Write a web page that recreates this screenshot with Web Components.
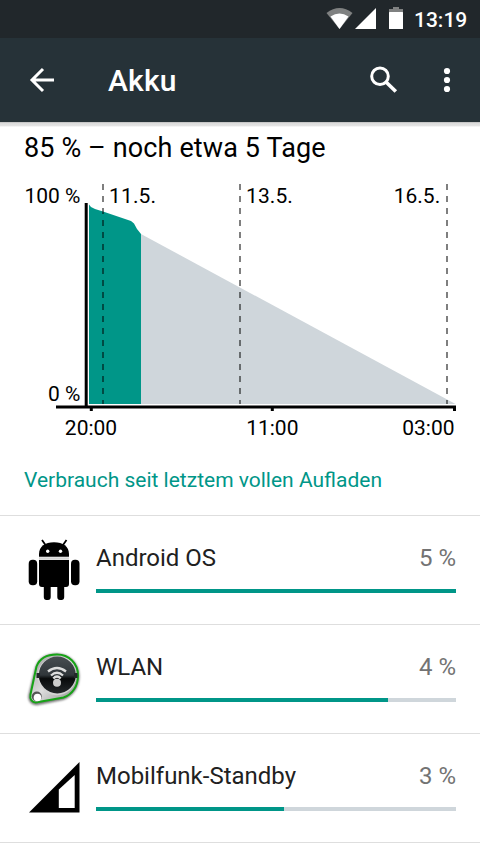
<!DOCTYPE html>
<html lang="de">
<head>
<meta charset="utf-8">
<title>Akku</title>
<style>
  html, body {
    margin: 0;
    height: 100%;
    overflow: hidden;
    background: #fff;
    font-family: Roboto, "Noto Sans", sans-serif;
  }
</style>
</head>
<body>
<battery-screen></battery-screen>

<script>
class StatusBar extends HTMLElement {
  constructor() {
    super();
    this.attachShadow({ mode: "open" });
  }
  connectedCallback() {
    this.shadowRoot.innerHTML = `
      <style>
        :host {
          display: flex;
          justify-content: flex-end;
          height: 38px;
          background: #21272b;
          color: #fff;
          box-sizing: border-box;
          padding-right: 12px;
        }
        svg { display: block; margin-right: 10px; }
        span {
          width: 54px;
          font-size: 21px;
          font-weight: 500;
          line-height: 40px;
        }
      </style>
      <svg width="78" height="38" viewBox="326 0 78 38" fill="#fff">
        <path d="M326.500 13Q339.500 3 352.500 13L339.500 29Z" fill="#7f8181"/>
        <path d="M330.500 16.500Q339.500 10.500 348.500 16.500L339.500 29Z"/>
        <path d="M355 29L376 8V29Z"/>
        <path d="M389 9H393V7H399V9H403V13H389Z" fill="#7f8181"/>
        <rect x="389" y="12" width="14" height="17" rx=".5"/>
      </svg>
      <span><slot></slot></span>
    `;
  }
}
customElements.define("status-bar", StatusBar);

class ToolBar extends HTMLElement {
  constructor() {
    super();
    this.attachShadow({ mode: "open" });
  }
  connectedCallback() {
    this.shadowRoot.innerHTML = `
      <style>
        :host {
          display: flex;
          height: 84px;
          background: #263238;
          color: #fff;
        }
        h1 {
          flex: 1;
          margin: 0;
          font-size: 30px;
          font-weight: 500;
          letter-spacing: .2px;
          line-height: 86px;
        }
        svg { display: block; }
        .back { margin-right: 24px; }
      </style>
      <svg class="back" width="84" height="84" viewBox="0 38 84 84" fill="none" stroke="#fff" stroke-width="3">
        <path d="M54 80H32M43 69L32 80L43 91"/>
      </svg>
      <h1><slot></slot></h1>
      <svg width="120" height="84" viewBox="360 38 120 84">
        <circle cx="380" cy="76.200" r="8.300" fill="none" stroke="#fff" stroke-width="3"/>
        <path d="M386 82L395.800 91.500" stroke="#fff" stroke-width="3.600"/>
        <g fill="#fff">
          <circle cx="447" cy="71" r="3.100"/>
          <circle cx="447" cy="80" r="3.100"/>
          <circle cx="447" cy="89" r="3.100"/>
        </g>
      </svg>
    `;
  }
}
customElements.define("tool-bar", ToolBar);

class BatteryChart extends HTMLElement {
  constructor() {
    super();
    this.attachShadow({ mode: "open" });
  }
  connectedCallback() {
    // Koordinaten entsprechen direkt dem Bildschirm (y ab 170)
    this.shadowRoot.innerHTML = `
      <style>
        :host { display: block; height: 280px; }
        svg { display: block; }
        text { font-family: Roboto, "Noto Sans", sans-serif; font-size: 21px; fill: #000; }
      </style>
      <svg width="480" height="280" viewBox="0 170 480 280">
        <path d="M141 404V234L455.500 404Z" fill="#cfd6db"/>
        <path d="M89 404V204.500L91 207L95 209L103 211.500L131 221L134 223.500L137 229L141 234V404Z" fill="#009688"/>
        <g stroke="#000" stroke-opacity=".5" stroke-width="2" stroke-dasharray="6 6">
          <path d="M103 184V404"/>
          <path d="M240 184V404"/>
          <path d="M447 184V404"/>
        </g>
        <g stroke="#000" stroke-width="3">
          <path d="M86.200 203V406"/>
          <path d="M56 407H456"/>
          <path d="M91.300 407V411M272.300 407V411M454.500 407V411"/>
        </g>
        <text x="80.500" y="203" text-anchor="end">100 %</text>
        <text x="109" y="203" letter-spacing=".15">11.5.</text>
        <text x="246" y="203" letter-spacing=".1">13.5.</text>
        <text x="440.200" y="203" text-anchor="end">16.5.</text>
        <text x="80.500" y="401" text-anchor="end">0 %</text>
        <text x="91" y="435" text-anchor="middle">20:00</text>
        <text x="272.300" y="435" text-anchor="middle">11:00</text>
        <text x="454.500" y="435" text-anchor="end">03:00</text>
      </svg>
    `;
  }
}
customElements.define("battery-chart", BatteryChart);

class UsageRow extends HTMLElement {
  constructor() {
    super();
    this.attachShadow({ mode: "open" });
  }
  connectedCallback() {
    this.shadowRoot.innerHTML = `
      <style>
        :host {
          display: grid;
          grid-template-columns: 80px 360px;
          height: 109px;
          padding-left: 16px;
          box-sizing: border-box;
          border-bottom: 1px solid #dedede;
        }
        ::slotted(svg) { display: block; margin-top: 14px; }
        .line {
          display: flex;
          justify-content: space-between;
          margin-top: 28px;
          height: 28px;
          line-height: 28px;
          font-size: 24px;
          color: #212121;
        }
        .value { color: #737373; }
        .track { margin-top: 17px; height: 4px; background: #cfd6db; }
        .fill { height: 4px; background: #009688; }
      </style>
      <slot></slot>
      <div>
        <div class="line">
          <span>${this.getAttribute("name")}</span>
          <span class="value">${this.getAttribute("value")}</span>
        </div>
        <div class="track"><div class="fill" style="width: ${this.getAttribute("bar")}px"></div></div>
      </div>
    `;
  }
}
customElements.define("usage-row", UsageRow);

class BatteryScreen extends HTMLElement {
  constructor() {
    super();
    this.attachShadow({ mode: "open" });
  }
  connectedCallback() {
    this.shadowRoot.innerHTML = `
      <style>
        :host { display: block; width: 480px; background: #fff; }
        .shadow { height: 5px; background: linear-gradient(#bdbdbd, #dcdcdc 30%, #e4e4e4 75%, #fff); }
        h2 {
          margin: 0;
          padding: 3px 24px 0;
          height: 40px;
          line-height: 37px;
          font-size: 27px;
          font-weight: 400;
          letter-spacing: .12px;
          color: #000;
        }
        h3 {
          margin: 0;
          padding: 12px 24px 0;
          height: 66px;
          line-height: 36px;
          box-sizing: border-box;
          font-size: 21px;
          font-weight: 400;
          color: #009688;
          border-bottom: 1px solid #dedede;
        }
      </style>
      <status-bar>13:19</status-bar>
      <tool-bar>Akku</tool-bar>
      <div class="shadow"></div>
      <h2>85 % – noch etwa 5 Tage</h2>
      <battery-chart></battery-chart>
      <h3>Verbrauch seit letztem vollen Aufladen</h3>
      <usage-row name="Android OS" value="5 %" bar="360">
        <svg width="80" height="80" viewBox="0 0 80 80">
          <path d="M26 10L29.500 15M50.500 10L47 15" stroke="#000" stroke-width="1.800"/>
          <path d="M23 26.800V24C23 16.500 29 12.200 38 12.200S53 16.500 53 24V26.800Z"/>
          <path d="M23 30H53V54Q53 57 50 57H48.200V67Q48.200 70 45.500 70H44Q41.300 70 41.300 67V57H34.700V67Q34.700 70 32 70H30.500Q27.800 70 27.800 67V57H26Q23 57 23 54Z"/>
          <rect x="12.700" y="29.700" width="8.500" height="25.500" rx="4"/>
          <rect x="55" y="29.700" width="8.500" height="25.500" rx="4"/>
          <path d="M23 28.500H53" stroke="#d5d5d5" stroke-width="2.400"/>
          <circle cx="31.700" cy="21.300" r="1.700" fill="#fff"/>
          <circle cx="44.500" cy="21.300" r="1.700" fill="#fff"/>
        </svg>
      </usage-row>
      <usage-row name="WLAN" value="4 %" bar="292">
        <svg width="80" height="80" viewBox="0 -1 80 80">
          <defs>
            <linearGradient id="metal" x1="0" y1="0" x2="1" y2="1">
              <stop offset="0" stop-color="#999"/>
              <stop offset=".5" stop-color="#ddd"/>
              <stop offset="1" stop-color="#888"/>
            </linearGradient>
            <linearGradient id="dial" x1="0" y1="0" x2="0" y2="1">
              <stop offset="0" stop-color="#484d51"/>
              <stop offset=".5" stop-color="#30363a"/>
              <stop offset=".6" stop-color="#080a0b"/>
              <stop offset="1" stop-color="#24282b"/>
            </linearGradient>
            <filter id="soft" x="-20%" y="-20%" width="140%" height="140%"><feGaussianBlur stdDeviation="1.300"/></filter>
          </defs>
          <path d="M20 28C23 19 31 14.500 41 14.500C53 14.500 62.500 24 62.500 36C62.500 47 56 56 47 59L22 64C16 65 12.500 61 13.500 55Z" fill="#777" stroke="#777" stroke-width="2" filter="url(#soft)"/>
          <path d="M20.500 26.500C23.500 18.500 31 14.500 41 14.500C53 14.500 62 23.500 62 35.500C62 46 56.500 54.500 47.500 57.500L21 62.300C16 63 13.500 59 14.500 54.500Z" fill="url(#metal)" stroke="#16a316" stroke-width="2"/>
          <circle cx="40.800" cy="36" r="19.300" fill="#d4d4d4"/>
          <circle cx="41.300" cy="35" r="18.500" fill="url(#dial)"/>
          <path d="M20.500 33H24V38H20.500ZM58 33H61.500V38H58Z" fill="#23272a"/>
          <g fill="none" stroke="#ddd" stroke-width="2.300">
            <path d="M32 31.500Q41 24.500 50 31.500"/>
            <path d="M35 35.500Q41 30 47 35.500"/>
            <path d="M37.300 38.500Q41 34.500 44.700 38.500"/>
          </g>
          <circle cx="41" cy="42.700" r="4" fill="#ccc"/>
          <circle cx="20.800" cy="56.500" r="5" fill="#555"/>
          <circle cx="21.500" cy="57.500" r="3.800" fill="#fff"/>
        </svg>
      </usage-row>
      <usage-row name="Mobilfunk-Standby" value="3 %" bar="188">
        <svg width="80" height="80" viewBox="0 -2 80 80">
          <path d="M13 62.500L63.500 12V62.500Z"/>
          <path d="M42.800 39.500L58.700 25V58H42.800Z" fill="#fff"/>
        </svg>
      </usage-row>
    `;
  }
}
customElements.define("battery-screen", BatteryScreen);
</script>
</body>
</html>
